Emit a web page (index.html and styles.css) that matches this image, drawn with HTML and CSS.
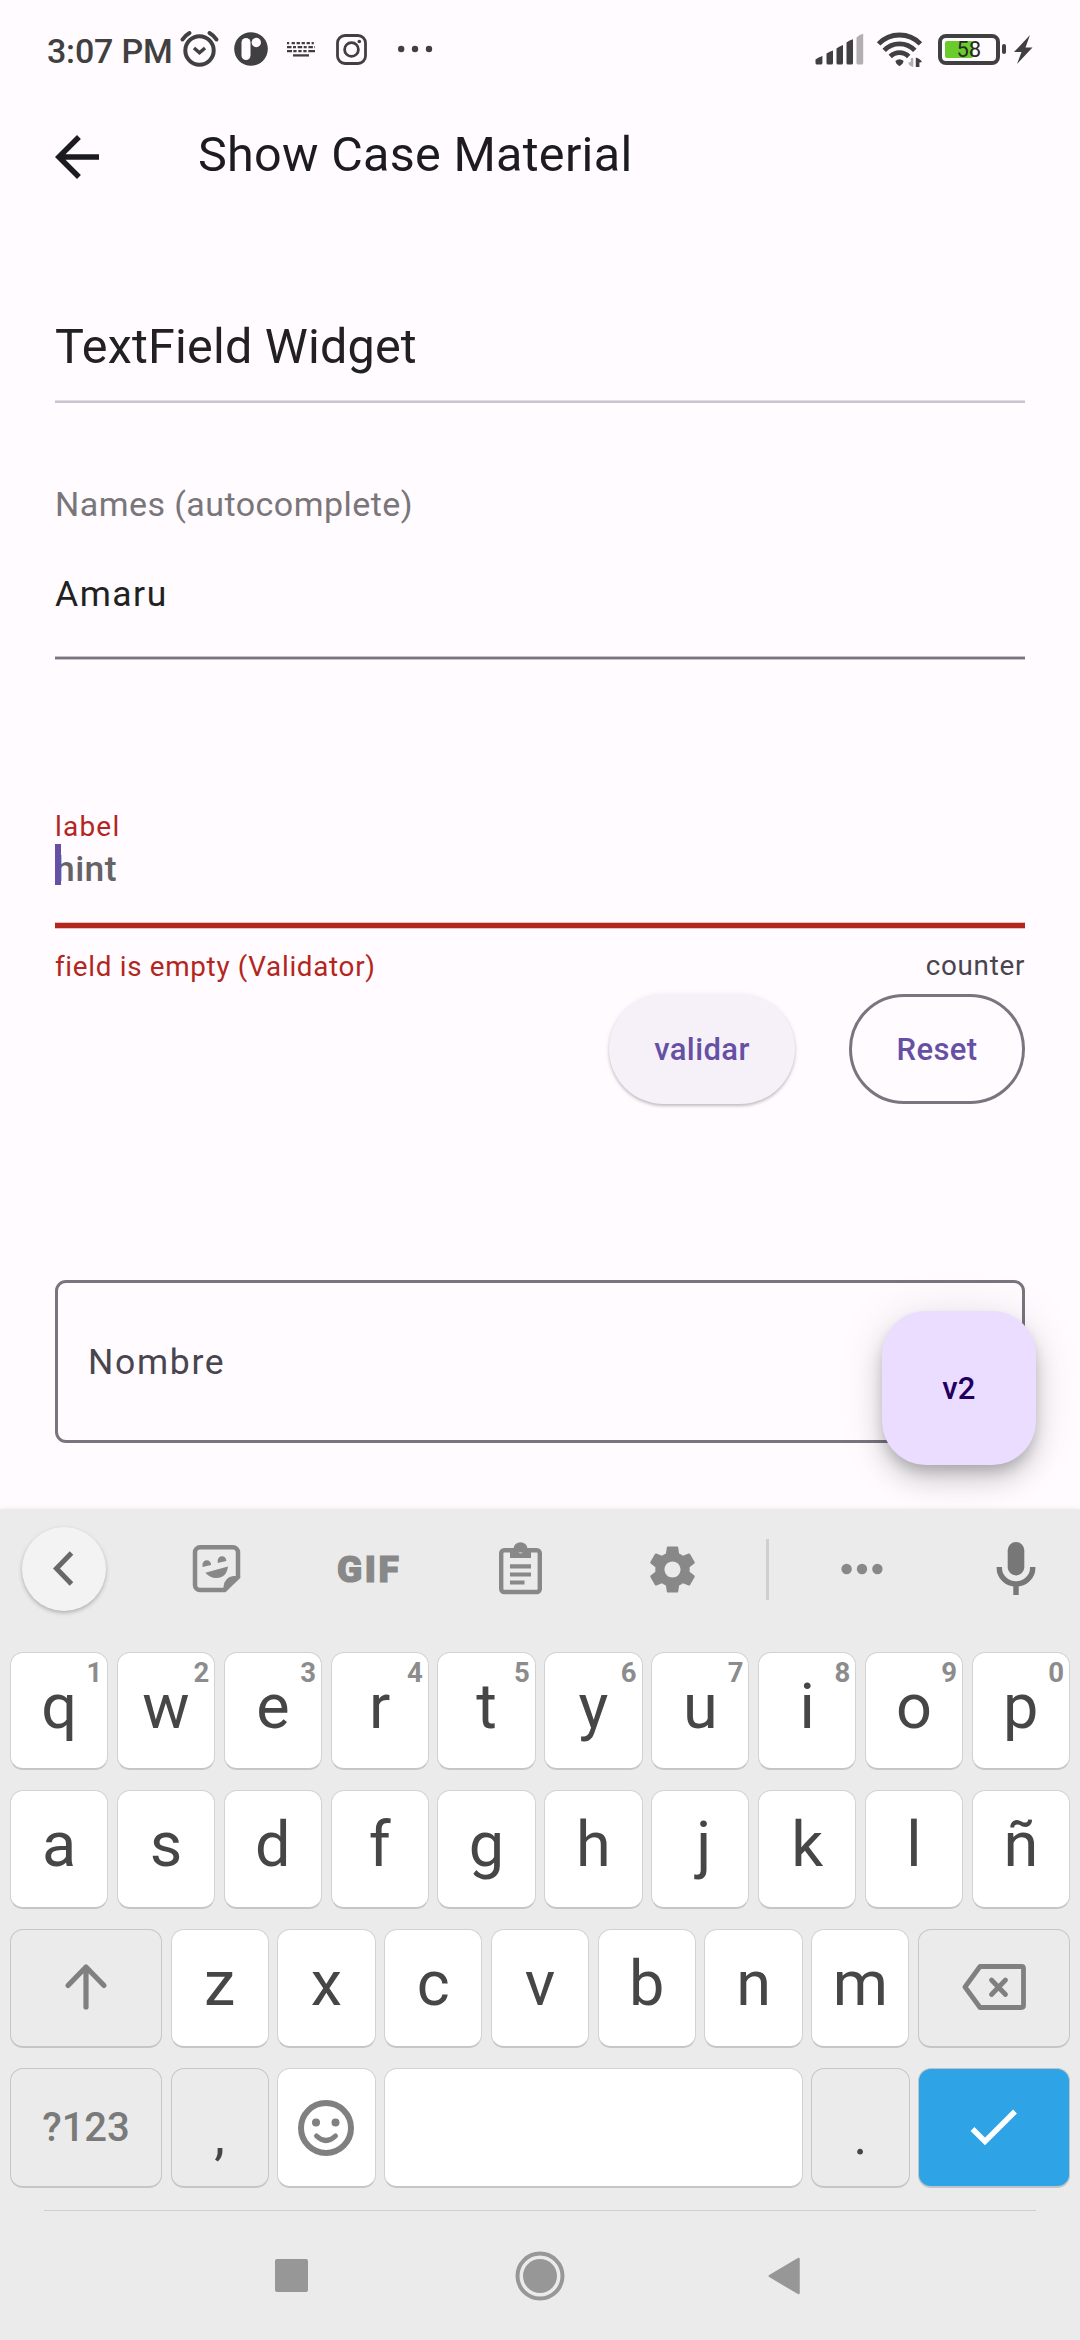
FILE: index.html
```html
<!DOCTYPE html>
<html lang="es">
<head>
<meta charset="utf-8">
<title>Show Case Material</title>
<link rel="stylesheet" href="styles.css">
</head>
<body>
<div class="screen">
  <header class="status">
    <span class="clock">3:07 PM</span>
    <svg class="s-alarm" width="40" height="38" viewBox="180 30 40 38" fill="none" stroke="#404040"><circle cx="199.500" cy="50.500" r="14.200" stroke-width="4"/><path d="M194 48l5.500 4.800 5.500-4.800" stroke-width="3.400"/><path d="M182.500 39.500q2.500-4 7-6.500M216.500 39.500q-2.500-4-7-6.500" stroke-width="4" stroke-linecap="round"/></svg>
    <svg class="s-app" width="34" height="34" viewBox="0 0 34 34"><circle cx="17" cy="17" r="16.800" fill="#404040"/><rect x="7.500" y="6" width="9" height="22" rx="4.500" fill="#fffbff"/><circle cx="22.300" cy="10.500" r="4.700" fill="#fffbff"/></svg>
    <svg class="s-keys" width="28" height="15" viewBox="0 0 28 15" stroke="#404040" stroke-width="2.300" fill="none"><path d="M0 1.200h28" stroke-dasharray="2.200 2.400 3.300 1.700 3.300 1.700 3.300 1.700 3.300 1.700"/><path d="M0 5.200h28" stroke-dasharray="4.500 1.500 3 1.700"/><path d="M0 9.200h28" stroke-dasharray="5 1.300 3.300 1.700 3.300 1.700 3.300 1.700 6 0"/><path d="M6 13.400h16"/></svg>
    <svg class="s-camera" width="31" height="31" viewBox="0 0 31 31" fill="none" stroke="#404040" stroke-width="2.800"><rect x="1.500" y="1.500" width="28" height="28" rx="7.500"/><circle cx="15.500" cy="15.500" r="6.900"/><circle cx="23.300" cy="7.500" r="1.800" fill="#404040" stroke="none"/></svg>
    <svg class="s-more" width="34" height="8" viewBox="0 0 34 8" fill="#404040"><circle cx="3.200" cy="4" r="3.200"/><circle cx="17" cy="4" r="3.200"/><circle cx="31" cy="4" r="3.200"/></svg>
    <svg class="s-signal" width="49" height="34" viewBox="815.500 32.500 49 34" fill="#404040"><path d="M816 60q3-2.500 6.900-3.500v7q0 1.500-1.500 1.500h-3.900q-1.500 0-1.500-1.500zM827 54q3-2 6.500-3v12.500q0 1.500-1.500 1.500h-3.500q-1.500 0-1.500-1.500zM837 49q3-2.500 6.500-3.500v18q0 1.500-1.500 1.500h-3.500q-1.500 0-1.500-1.500zM847 43q3-2.500 6.500-3.300v23.800q0 1.500-1.500 1.500h-3.500q-1.500 0-1.500-1.500z"/><path fill="#b1afb1" d="M857 38q3-3 6.700-3.800v29.300q0 1.500-1.500 1.500h-3.700q-1.500 0-1.500-1.500z"/></svg>
    <svg class="s-wifi" width="46" height="36" viewBox="877 31 46 36" fill="none" stroke="#404040" stroke-width="4.800"><path d="M878.600 43.900a29 29 0 0 1 41.800 0M884.200 50.400a21 21 0 0 1 30.600 0M890.300 56.500a13 13 0 0 1 18.400 0"/><path d="M895.300 61q4.200-3.600 8.400 0l-1.200 2.700-3 2.500-3-2.500z" fill="#404040" stroke="none"/><path d="M913.300 58v9q-4.500-1-5-4.500l2.500-.5V58z" fill="#b1afb1" stroke="none"/><path d="M915.800 67v-9.500q4.500 1 6.200 4.500l-2.600.5V67z" fill="#404040" stroke="none"/></svg>
    <div class="battery"><span class="level"></span><span class="pct">58</span></div>
    <span class="nub"></span>
    <svg class="s-bolt" width="19" height="29" viewBox="0 0 19 29"><path fill="#404040" d="M16 0 0 17h7.500L3 29 18.500 12.500h-7z"/></svg>
  </header>

  <nav class="appbar">
    <svg width="66" height="66" viewBox="0 0 24 24" fill="#1c1b1f"><path d="M20 11H7.830l5.590-5.590L12 4l-8 8 8 8 1.410-1.410L7.830 13H20z"/></svg>
    <h1>Show Case Material</h1>
  </nav>

  <main class="content">
    <h2>TextField Widget</h2>
    <div class="divider"></div>
    <p class="caption">Names (autocomplete)</p>
    <p class="value">Amaru</p>
    <div class="underline"></div>
    <p class="float-label">label</p>
    <p class="hint"><span class="cursor"></span>hint</p>
    <div class="underline-error"></div>
    <div class="helper"><span class="error">field is empty (Validator)</span><span class="counter">counter</span></div>
    <div class="buttons"><div class="btn elevated">validar</div><div class="btn outlined">Reset</div></div>
    <div class="outline-field">Nombre</div>
  </main>
  <div class="fab">v2</div>

  <section class="keyboard">
    <div class="tools">
      <div class="back"><svg width="22" height="36" viewBox="0 0 22 36" fill="none" stroke="#686868" stroke-width="5"><path d="M18.500 2 3.500 17.500 18.500 33"/></svg></div>
      <svg class="t-sticker" width="48" height="48" viewBox="193 1546 48 48"><path d="M200 1548.300h33a5 5 0 0 1 5 5V1578l-13.500 13H200a5 5 0 0 1-5-5v-32.700a5 5 0 0 1 5-5z" fill="none" stroke="#888" stroke-width="4.500"/><path d="M223.500 1592v-4q1-10 10-11h7l-14.500 15.500zM202.500 1568v-2.500a4.300 4.300 0 0 1 8.600 0v.5zM217.700 1564v-2.500a4.300 4.300 0 0 1 8.600 0v.500zM205.300 1573.700l22.700-6.200q-1 7.500-5.500 10-9.500 4.500-17.200-3.800z" fill="#888"/></svg>
      <span class="t-gif">GIF</span>
      <svg class="t-clip" width="43" height="52" viewBox="499 1544 43 52"><rect x="501.200" y="1551.200" width="38.600" height="41.800" rx="3" fill="none" stroke="#888" stroke-width="4.400"/><path fill="#888" fill-rule="evenodd" d="M510 1549h3.600a7 7 0 0 1 13.800 0h3.600v10h-21zM520.500 1549a2.700 2.700 0 1 0 .1 0z"/><path d="M510 1567.300h21M510 1575.500h21M510 1583.500h14.500" stroke="#888" stroke-width="4.200"/></svg>
      <svg class="t-gear" width="55" height="55" viewBox="0 0 24 24" fill="#888"><path d="M19.430 12.980c.04-.32.07-.64.07-.98s-.03-.66-.07-.98l2.110-1.650c.19-.15.24-.42.12-.64l-2-3.460c-.12-.22-.39-.3-.61-.22l-2.490 1c-.52-.4-1.080-.73-1.690-.98l-.38-2.650C14.460 2.180 14.250 2 14 2h-4c-.25 0-.46.18-.49.42l-.38 2.650c-.61.25-1.170.59-1.690.98l-2.490-1c-.23-.09-.49 0-.61.22l-2 3.460c-.13.22-.07.49.12.64l2.110 1.650c-.04.32-.07.65-.07.98s.03.66.07.98l-2.110 1.650c-.19.15-.24.42-.12.64l2 3.460c.12.22.39.3.61.22l2.490-1c.52.4 1.080.73 1.690.98l.38 2.650c.03.24.24.42.49.42h4c.25 0 .46-.18.49-.42l.38-2.650c.61-.25 1.170-.59 1.690-.98l2.490 1c.23.09.49 0 .61-.22l2-3.460c.12-.22.07-.49-.12-.64l-2.110-1.650zM12 15.500c-1.930 0-3.500-1.570-3.500-3.500s1.570-3.500 3.500-3.500 3.500 1.570 3.500 3.500-1.570 3.500-3.500 3.500z"/></svg>
      <span class="sep"></span>
      <svg class="t-dots" width="42" height="12" viewBox="0 0 42 12" fill="#888"><circle cx="5.600" cy="6" r="5.200"/><circle cx="21" cy="6" r="5.200"/><circle cx="36.400" cy="6" r="5.200"/></svg>
      <svg class="t-mic" width="40" height="54" viewBox="0 0 40 54"><rect x="11.700" y="0" width="16.600" height="33.500" rx="8.300" fill="#777"/><path d="M3.300 25v1a16.700 16 0 0 0 33.400 0v-1M20 42v11" fill="none" stroke="#777" stroke-width="5.400"/></svg>
    </div>
    <div class="rows">
      <div class="row ten">
        <div class="key">q<i>1</i></div><div class="key">w<i>2</i></div><div class="key">e<i>3</i></div><div class="key">r<i>4</i></div><div class="key">t<i>5</i></div><div class="key">y<i>6</i></div><div class="key">u<i>7</i></div><div class="key">i<i>8</i></div><div class="key">o<i>9</i></div><div class="key">p<i>0</i></div>
      </div>
      <div class="row ten">
        <div class="key">a</div><div class="key">s</div><div class="key">d</div><div class="key">f</div><div class="key">g</div><div class="key">h</div><div class="key j">j</div><div class="key">k</div><div class="key">l</div><div class="key">ñ</div>
      </div>
      <div class="row nine">
        <div class="key grey"><svg width="42" height="46" viewBox="0 0 42 46" fill="none" stroke="#808080" stroke-width="5.200" stroke-linecap="round" stroke-linejoin="round"><path d="M21 43V3M3 21.500 21 3l18 18.500"/></svg></div>
        <div class="key">z</div><div class="key">x</div><div class="key">c</div><div class="key">v</div><div class="key">b</div><div class="key">n</div><div class="key">m</div>
        <div class="key grey"><svg width="64" height="46" viewBox="0 0 64 46" fill="none" stroke="#808080" stroke-width="4.800" stroke-linecap="round" stroke-linejoin="round"><path d="M18 2.500h41.500q2 0 2 2v37q0 2-2 2H18L3 23z"/><path d="M29.500 16l14 14.500M43.500 16l-14 14.500"/></svg></div>
      </div>
      <div class="row nine last">
        <div class="key grey sym">?123</div>
        <div class="key grey comma">,</div>
        <div class="key"><svg width="56" height="56" viewBox="0 0 56 56" fill="none" stroke="#808080"><circle cx="28" cy="28" r="25" stroke-width="6"/><circle cx="18" cy="22.500" r="4" fill="#808080" stroke="none"/><circle cx="37.500" cy="22.500" r="4" fill="#808080" stroke="none"/><path d="M18.500 36q9.500 9 19 0" stroke-width="5" stroke-linecap="round"/></svg></div>
        <div class="key space"></div>
        <div class="key grey dot">.</div>
        <div class="key enter"><svg width="48" height="38" viewBox="0 0 48 38" fill="none" stroke="#fff" stroke-width="5.400"><path d="M2.500 20 15 32.500 45 2.500"/></svg></div>
      </div>
    </div>
    <div class="rule"></div>
    <div class="navbar">
      <span class="recent"></span>
      <svg class="home" width="50" height="50" viewBox="0 0 50 50"><circle cx="25" cy="25" r="22.500" fill="none" stroke="#979797" stroke-width="4"/><circle cx="25" cy="25" r="17" fill="#979797"/></svg>
      <svg width="32" height="38" viewBox="0 0 32 38"><path d="M1.800 19 30.500 2v34z" fill="#979797" stroke="#979797" stroke-width="2.500" stroke-linejoin="round"/></svg>
    </div>
  </section>
</div>
</body>
</html>
```
FILE: styles.css
```css
* { box-sizing: border-box; margin: 0; padding: 0; }
body { font-family: Roboto, sans-serif; background: #fffbff; }
svg { display: block; flex: none; overflow: visible; }
.screen { position: relative; width: 1080px; height: 2340px; overflow: hidden; background: #fffbff; display: flex; flex-direction: column; }

.status { height: 98px; display: flex; align-items: center; padding-left: 47px; }
.clock { width: 133px; font-size: 34px; font-weight: 500; line-height: 40px; padding-top: 3px; color: #404040; white-space: nowrap; letter-spacing: -.2px; }
.s-app { margin-left: 14px; }
.s-keys { margin-left: 19px; }
.s-camera { margin-left: 21px; }
.s-more { margin-left: 31px; }
.s-signal { margin-left: auto; }
.s-wifi { margin-left: 13px; }
.battery { position: relative; margin-left: 15px; width: 62px; height: 31px; border: 4px solid #404040; border-radius: 8px; }
.level { position: absolute; left: 3px; top: 3px; width: 28px; height: 17px; border-radius: 2px; background: #69cc2a; }
.pct { position: absolute; left: 14.500px; top: 0; line-height: 24px; font-size: 22px; letter-spacing: -.2px; color: #2a2a2a; }
.nub { margin-left: 2px; width: 4px; height: 10px; border-radius: 2px; background: #404040; }
.s-bolt { margin: 0 47px 0 8px; }

.appbar { height: 118px; display: flex; align-items: center; padding-left: 44px; color: #1c1b1f; }
.appbar h1 { margin: -4px 0 0 88px; font-size: 48.500px; font-weight: 400; letter-spacing: .3px; line-height: 60px; }

.content { padding: 100px 55px 0; height: 1293px; }
h2 { font-size: 48.500px; line-height: 61px; font-weight: 400; letter-spacing: .2px; color: #212121; }
.divider { margin-top: 23px; height: 3px; background: linear-gradient(#e0dbe4 1px, #cac4d0 1px); }
.caption { margin-top: 81px; font-size: 34px; line-height: 40px; letter-spacing: .45px; color: #79767a; }
.value { margin-top: 50px; font-size: 35.500px; line-height: 40px; letter-spacing: 1.500px; color: #212121; }
.underline { margin-top: 42px; height: 4px; background: linear-gradient(#c5c1c8 1px, #79747e 1px, #79747e 3px, #c5c1c8 3px); }
.float-label { margin-top: 151px; font-size: 28px; line-height: 31px; letter-spacing: 1.200px; color: #b3261e; }
.hint { position: relative; margin-top: 6px; font-size: 35.500px; line-height: 42px; font-weight: 500; letter-spacing: .4px; color: #666367; }
.cursor { position: absolute; left: 0; top: -4px; width: 5.500px; height: 41px; background: #6750a4; }
.underline-error { margin-top: 32px; height: 7px; background: linear-gradient(#ebbfbd 1px, #b3261e 1px, #b3261e 6px, #ebbfbd 6px); }
.helper { margin-top: 22px; display: flex; justify-content: space-between; font-size: 27.800px; line-height: 32px; letter-spacing: .7px; color: #49454f; }
.helper .error { color: #b3261e; }
.helper .counter { margin-top: -1px; }
.buttons { margin-top: 11px; display: flex; justify-content: flex-end; gap: 54px; }
.btn { height: 110px; border-radius: 55px; display: flex; align-items: center; justify-content: center; font-size: 31px; font-weight: 500; letter-spacing: .4px; color: #6750a4; }
.elevated { width: 186px; background: #f6f1f9; box-shadow: 0 2px 3px rgba(0,0,0,.2), 0 1px 6px rgba(0,0,0,.08); }
.outlined { width: 176px; border: 3px solid #79747e; }
.outline-field { margin-top: 176px; height: 163px; border: 3px solid #79747e; border-radius: 11px; padding-left: 30px; display: flex; align-items: center; font-size: 35.500px; letter-spacing: 1.700px; color: #49454f; }
.fab { position: absolute; left: 882px; top: 1311px; width: 154px; height: 154px; border-radius: 44px; background: #eaddff; color: #21005d; display: flex; align-items: center; justify-content: center; font-size: 31px; font-weight: 500; letter-spacing: .3px; box-shadow: 0 8px 14px -3px rgba(0,0,0,.2), 0 16px 27px rgba(0,0,0,.14), 0 3px 50px rgba(0,0,0,.1); }

.keyboard { position: relative; height: 831px; background: #ebebeb; box-shadow: 0 0 6px rgba(0,0,0,.08); }
.tools { height: 120px; padding-left: 22px; display: flex; align-items: center; }
.back { width: 84px; height: 84px; border-radius: 50%; background: #f3f3f3; box-shadow: 0 2px 4px rgba(0,0,0,.25); display: flex; align-items: center; justify-content: center; }
.t-sticker { margin-left: 87px; }
.t-gif { margin-left: 96px; width: 66px; font-size: 37px; font-weight: 900; letter-spacing: 2.500px; color: #888; -webkit-text-stroke: 1.200px #888; }
.t-clip { margin-left: 96px; }
.t-gear { margin-left: 103px; }
.sep { margin-left: 66px; width: 3px; height: 61px; background: #cfcfcf; }
.t-dots { margin-left: 72px; }
.t-mic { margin-left: 113px; }
.rows { padding: 23px 10px 0; display: grid; grid-template-rows: 118px 119px 119px 120px; row-gap: 20px; }
.row { display: grid; column-gap: 8.500px; }
.ten { grid-template-columns: repeat(10, 1fr); }
.nine { grid-template-columns: 152px repeat(7, 1fr) 152px; }
.key { position: relative; background: #fff; border: 1px solid #d2d2d2; border-bottom: 2px solid #c6c6c6; border-radius: 13px; display: flex; align-items: center; justify-content: center; font-size: 63px; line-height: 72px; padding-bottom: 8px; color: #464646; }
.key i { position: absolute; right: 5px; top: 3px; font-size: 27.500px; line-height: 34px; font-style: normal; font-weight: 700; color: #8c8c8c; }
.key.j { padding-left: 7px; }
.grey { background: #ebebeb; border-color: #c6c6c6; }
.grey svg { margin-top: 6px; }
.last .key { padding-bottom: 0; }
.key.sym { font-size: 40px; font-weight: 500; color: #7a7a7a; }
.last .comma { font-size: 54px; padding-top: 16px; }
.last .dot { font-size: 52px; padding-top: 18px; }
.space { grid-column: span 4; }
.enter { background: #2ea4e6; border-color: #c0c4c8; }
.rule { margin: 22px 44px 0; height: 1px; background: #cfcfcf; }
.navbar { height: 129px; display: flex; align-items: center; padding-left: 275px; }
.recent { width: 33px; height: 33px; border-radius: 2px; background: #979797; }
.home { margin: 0 203px 0 207px; }
```
